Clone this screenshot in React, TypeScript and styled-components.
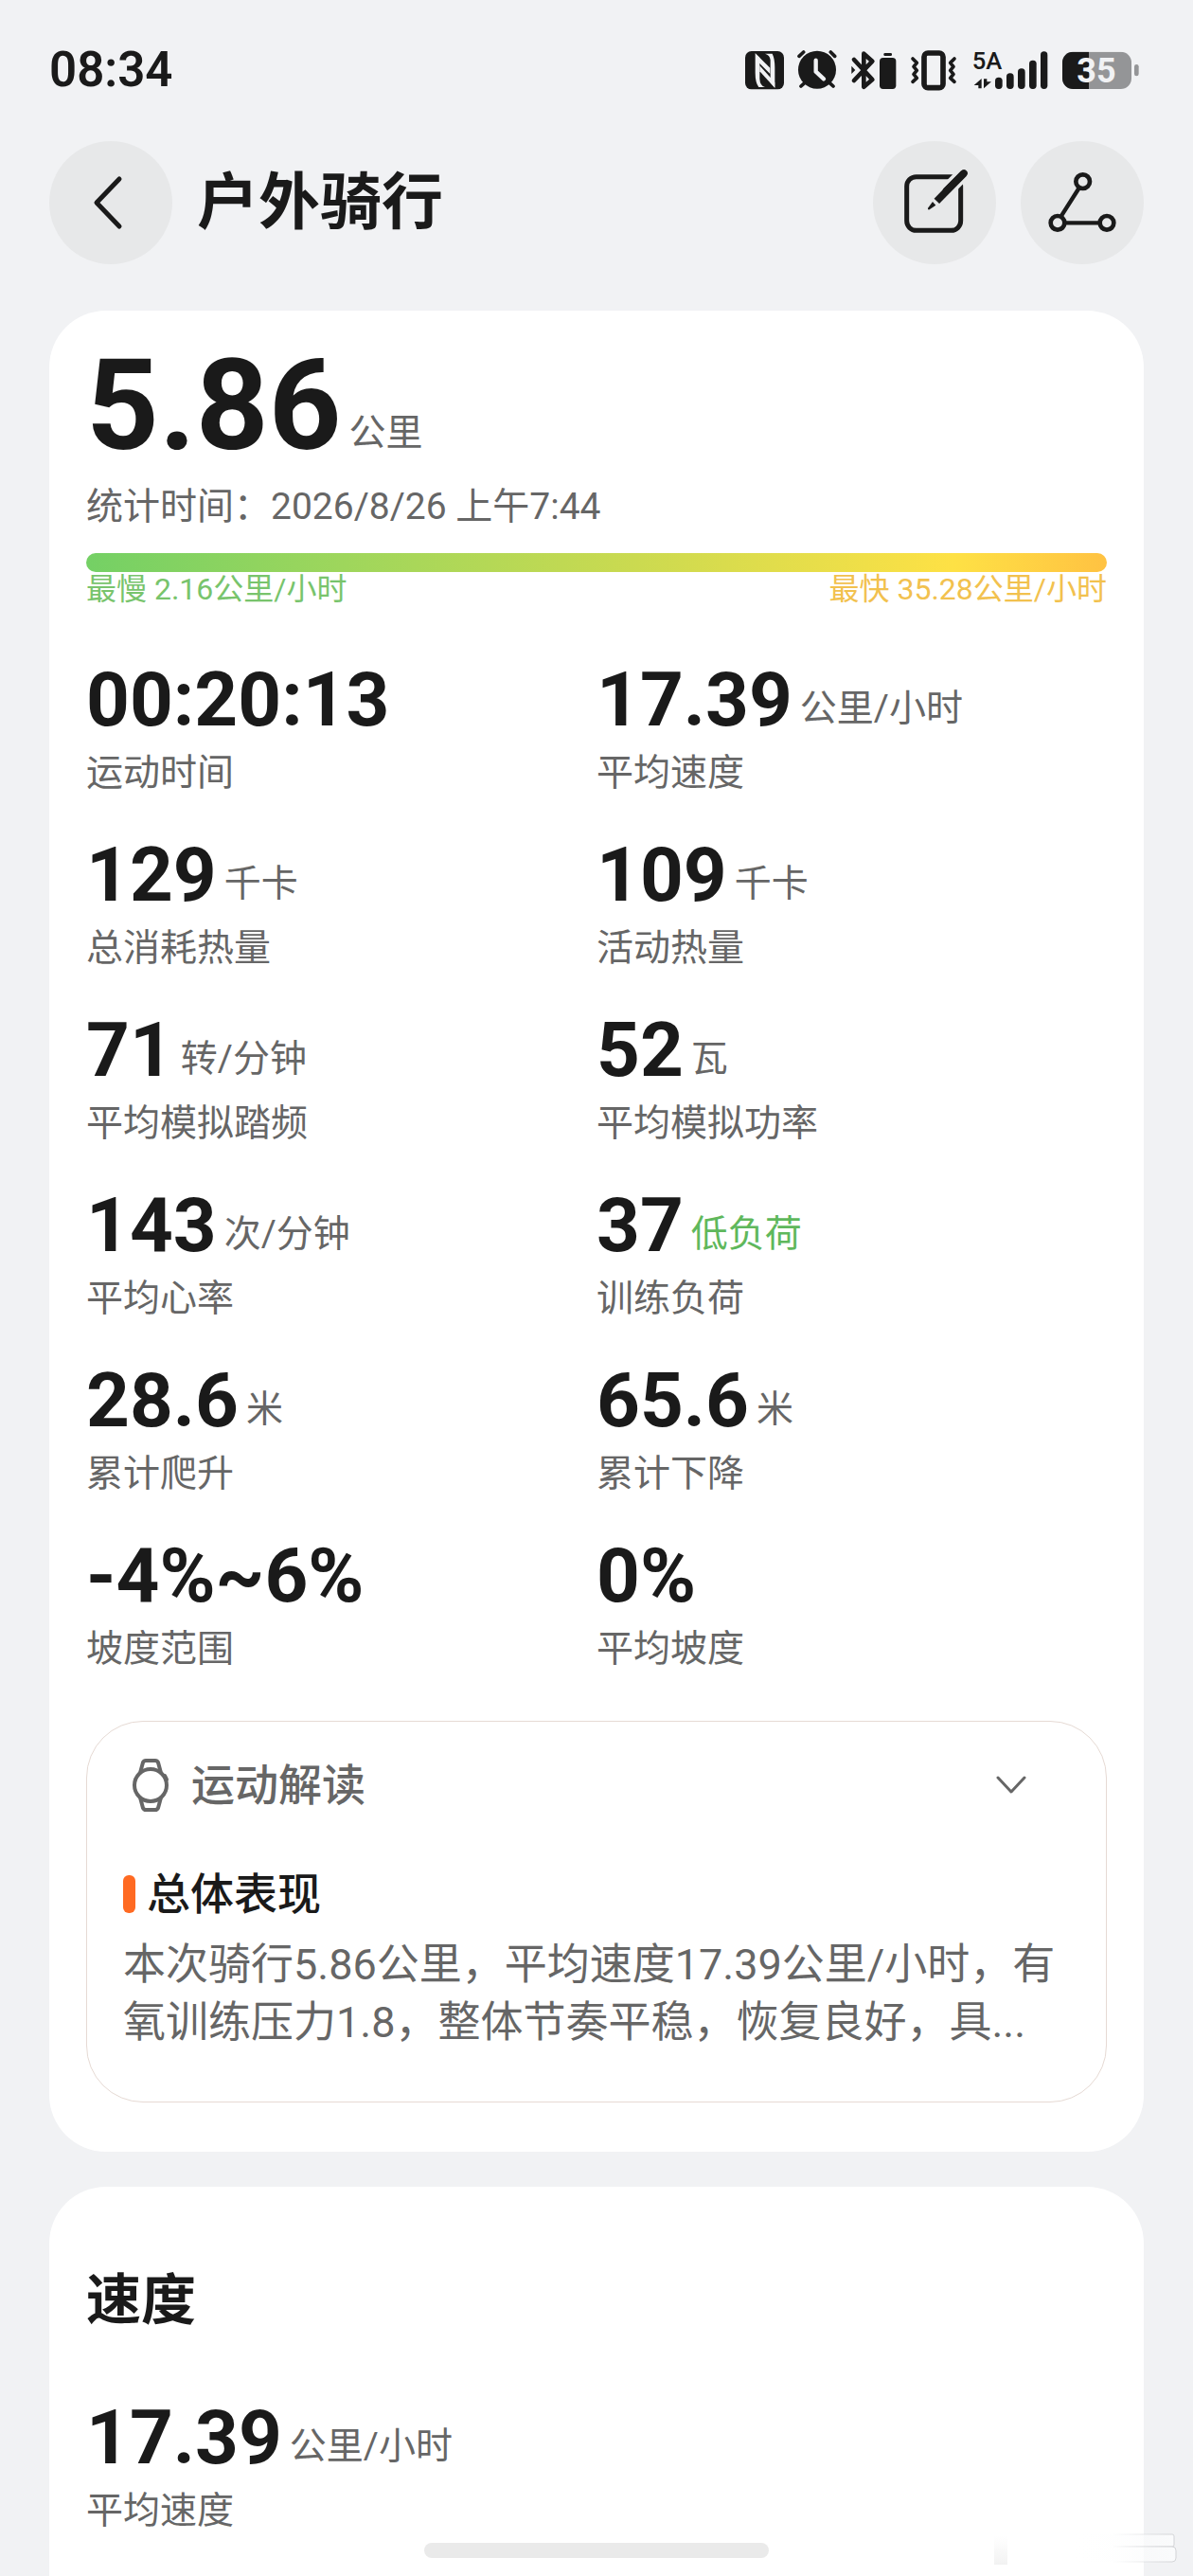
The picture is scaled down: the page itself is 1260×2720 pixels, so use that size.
import React, { useState } from 'react';
import styled, { createGlobalStyle } from 'styled-components';

const color = {
  page: '#f1f2f4',
  card: '#ffffff',
  control: '#e7e8e9',
  text: '#1a1a1a',
  muted: '#666666',
  outline: '#e6dad4',
  accent: '#ff6a22',
  slow: '#78c46c',
  fast: '#f2c14e',
  low: '#5fb85c',
  indicator: '#eaeaea',
};

const GlobalStyle = createGlobalStyle`
  *, *::before, *::after { box-sizing: border-box; }
  body {
    margin: 0;
    background: ${color.page};
    color: ${color.text};
    font-family: Roboto, "Noto Sans CJK SC", sans-serif;
  }
  h1, h2, h3, p, dl, dd { margin: 0; }
  button { font-family: inherit; border: 0; padding: 0; cursor: pointer; }
  svg { display: block; flex: none; }
`;

const Page = styled.div`
  position: relative;
  display: flex;
  flex-direction: column;
  min-height: 100vh;
  overflow: hidden;
`;

const StatusBar = styled.div`
  display: flex;
  align-items: center;
  justify-content: space-between;
  height: 149px;
  padding: 0 57px 2px 52px;
`;

const Clock = styled.time`
  font-size: 51px;
  line-height: 60px;
  font-weight: 600;
`;

const StatusIcons = styled.div`
  display: flex;
  align-items: center;
  gap: 14px;
`;

const Header = styled.header`
  display: flex;
  align-items: center;
  gap: 26px;
  padding: 0 52px;
`;

const RoundButton = styled.button`
  width: 130px;
  height: 130px;
  border-radius: 50%;
  background: ${color.control};
`;

const Title = styled.h1`
  flex: 1;
  font-size: 65px;
  line-height: 84px;
  font-weight: 700;
`;

const Main = styled.main`
  display: flex;
  flex: 1;
  flex-direction: column;
  gap: 37px;
  padding: 49px 52px 0;
`;

const Card = styled.section<{ $continues?: boolean }>`
  flex: ${(p) => (p.$continues ? '1' : 'none')};
  padding: ${(p) => (p.$continues ? '82px 39px 40px' : '35px 39px 52px')};
  border-radius: ${(p) => (p.$continues ? '60px 60px 0 0' : '60px')};
  background: ${color.card};
`;

const Reading = styled.div`
  display: flex;
  align-items: flex-end;
  gap: 8px;
`;

const Figure = styled.span<{ $large?: boolean }>`
  font-size: ${(p) => (p.$large ? '134px' : '80px')};
  line-height: ${(p) => (p.$large ? '132px' : '94px')};
  font-weight: 700;
`;

const Unit = styled.span<{ $tone?: string }>`
  padding-bottom: 12px;
  font-size: 39px;
  line-height: 52px;
  color: ${(p) => p.$tone ?? color.muted};
`;

const Recorded = styled.p`
  margin-top: 14px;
  font-size: 39px;
  line-height: 52px;
  color: ${color.muted};
`;

const SpeedBar = styled.div`
  height: 20px;
  margin-top: 23px;
  border-radius: 10px;
  background: linear-gradient(90deg, #74d065 0%, #9ed65c 25%, #cbda50 54%, #fee145 85%, #ffc242 100%);
`;

const SpeedRange = styled.div`
  display: flex;
  justify-content: space-between;
  font-size: 32px;
  line-height: 36px;
`;

const SpeedLimit = styled.span<{ $tone: string }>`
  color: ${(p) => p.$tone};
`;

const MetricGrid = styled.dl`
  display: grid;
  grid-template-columns: 1fr 1fr;
  row-gap: 35px;
  padding: 52px 0 50px;
`;

const SpeedMetric = styled.dl`
  padding-top: 60px;
`;

const MetricCell = styled.div`
  display: flex;
  flex-direction: column-reverse;
  gap: 4px;
`;

const MetricName = styled.dt`
  font-size: 39px;
  line-height: 52px;
  color: ${color.muted};
`;

const Insight = styled.article`
  padding: 37px 38px 53px;
  border: 1px solid ${color.outline};
  border-radius: 60px;
`;

const InsightToggle = styled.button`
  display: flex;
  align-items: center;
  gap: 16px;
  width: 100%;
  padding-right: 45px;
  background: none;
  color: ${color.muted};
  font-size: 46px;
  line-height: 60px;
  font-weight: 500;
  text-align: left;
`;

const InsightLabel = styled.span`
  flex: 1;
`;

const InsightHeading = styled.h3`
  display: flex;
  align-items: center;
  gap: 12px;
  margin-top: 55px;
  font-size: 46px;
  line-height: 60px;
  font-weight: 500;

  &::before {
    content: '';
    width: 13px;
    height: 40px;
    border-radius: 6px;
    background: ${color.accent};
  }
`;

const InsightText = styled.p`
  margin-top: 14px;
  font-size: 45px;
  line-height: 61px;
  color: ${color.muted};
`;

const SectionTitle = styled.h2`
  font-size: 58px;
  line-height: 76px;
  font-weight: 700;
`;

const HomeIndicator = styled.div`
  position: absolute;
  bottom: 19px;
  left: 50%;
  width: 364px;
  height: 16px;
  margin-left: -182px;
  border-radius: 8px;
  background: ${color.indicator};
`;

const CornerMark = styled.svg`
  position: absolute;
  right: 10px;
  bottom: 10px;
`;

const NfcIcon = () => (
  <svg width="41" height="44" viewBox="85 66 123 132" aria-hidden="true">
    <rect x="85" y="72" width="123" height="121" rx="20" fill={color.text} />
    <g fill={color.page}>
      <path d="M117 79 131 92V160Q132 182 148 186H128Q117 172 117 140Z" />
      <path d="M117 79 164 125V144L128 108Z" />
      <path d="M131 118 179 171V188L131 136Z" />
      <path d="M148 80H171Q179 96 179 124V188L165 172V100Q163 84 148 80Z" />
    </g>
  </svg>
);

const AlarmIcon = () => (
  <svg width="42" height="44" viewBox="252 66 126 132" fill="none" strokeLinecap="round" aria-hidden="true">
    <circle cx="315" cy="131" r="60" fill={color.text} />
    <path d="M258 88 272 75M358 75 371 88M264 183 276 172M354 172 366 183" stroke={color.text} strokeWidth="11" />
    <path d="M311 101V137L336 160" stroke={color.page} strokeWidth="13" strokeLinejoin="round" />
  </svg>
);

const BluetoothIcon = () => (
  <svg width="49" height="44" viewBox="420 66 147 132" aria-hidden="true">
    <path
      d="M432 99 490 162 463 185V80L490 104 432 165"
      fill="none"
      stroke={color.text}
      strokeWidth="14"
      strokeLinecap="round"
      strokeLinejoin="round"
    />
    <path d="M424 119 436 132 424 144Z" fill={color.text} />
    <rect x="526" y="78" width="26" height="9" rx="4" fill={color.text} />
    <rect x="513" y="93" width="52" height="99" rx="11" fill={color.text} />
  </svg>
);

const VibrateIcon = () => (
  <svg
    width="51"
    height="44"
    viewBox="609 66 153 132"
    fill="none"
    stroke={color.text}
    strokeLinecap="round"
    strokeLinejoin="round"
    aria-hidden="true"
  >
    <rect x="654" y="78" width="60" height="110" rx="12" strokeWidth="17" />
    <path
      d="M618 96 631 109 621 121 631 133 621 145 631 157 618 169M750 96 737 109 747 121 737 133 747 145 737 157 750 169"
      strokeWidth="11"
    />
  </svg>
);

const SignalIcon = () => (
  <svg width="82" height="64" viewBox="798 36 246 192" fill={color.text} aria-hidden="true">
    <text x="800" y="128" fontSize="77" fontWeight="500">
      5A
    </text>
    <path d="M806 180 830 159V190H820V180ZM837 190V160H847V169H861Z" />
    <rect x="873" y="155" width="23" height="37" rx="11" />
    <rect x="909" y="142" width="23" height="50" rx="11" />
    <rect x="945" y="127" width="23" height="65" rx="11" />
    <rect x="981" y="101" width="23" height="91" rx="11" />
    <rect x="1017" y="73" width="22" height="119" rx="11" />
  </svg>
);

const BatteryIcon = () => (
  <svg width="81" height="44" viewBox="1086 66 243 132" aria-hidden="true">
    <clipPath id="battery-body">
      <rect x="1086" y="74" width="219" height="118" rx="34" />
    </clipPath>
    <g clipPath="url(#battery-body)">
      <rect x="1086" y="74" width="219" height="118" fill="#949597" />
      <rect x="1086" y="74" width="84" height="118" fill={color.text} />
    </g>
    <rect x="1314" y="114" width="14" height="37" rx="7" fill="#949597" />
    <text x="1194" y="171" fontSize="108" fontWeight="700" textAnchor="middle" fill={color.page}>
      35
    </text>
  </svg>
);

const BackIcon = () => (
  <svg
    width="130"
    height="130"
    viewBox="0 0 130 130"
    fill="none"
    stroke={color.text}
    strokeWidth="5"
    strokeLinecap="round"
    strokeLinejoin="round"
    aria-hidden="true"
  >
    <path d="M74 40 50 65 74 90" />
  </svg>
);

const EditIcon = () => (
  <svg width="130" height="130" viewBox="67 56 390 390" fill="none" aria-hidden="true">
    <rect x="174" y="169" width="171" height="170" rx="30" stroke={color.text} strokeWidth="15" />
    <path d="M385 128 285 228" stroke={color.control} strokeWidth="45" />
    <path d="M355 158 300 213" stroke={color.text} strokeWidth="23" strokeLinecap="round" />
    <path d="M355 158 269 246" stroke={color.text} strokeWidth="23" />
    <path d="M256 248 266 259 246 273Q240 275 241 268Z" fill={color.text} />
  </svg>
);

const RouteIcon = () => (
  <svg width="130" height="130" viewBox="534 56 390 390" fill="none" stroke={color.text} aria-hidden="true">
    <path d="M720 203 662 294M674 315H784" strokeWidth="13" />
    <circle cx="731" cy="184" r="22" strokeWidth="14" />
    <circle cx="651" cy="315" r="22" strokeWidth="14" />
    <circle cx="807" cy="315" r="22" strokeWidth="14" />
  </svg>
);

const WatchIcon = () => (
  <svg width="56" height="60" viewBox="0 0 56 60" fill="none" stroke={color.muted} strokeWidth="4" aria-hidden="true">
    <circle cx="29" cy="30" r="17" />
    <path d="M18 17 21 6Q22 4 24 4H34Q36 4 37 6L40 17M18 43 21 54Q22 56 24 56H34Q36 56 37 54L40 43" />
    <path d="M44 20 46 24" strokeLinecap="round" />
  </svg>
);

const ChevronIcon = () => (
  <svg
    width="34"
    height="20"
    viewBox="0 0 34 20"
    fill="none"
    stroke={color.muted}
    strokeWidth="3"
    strokeLinecap="round"
    strokeLinejoin="round"
    aria-hidden="true"
  >
    <path d="M3 2 17 17 31 2" />
  </svg>
);

type MetricData = { name: string; value: string; unit?: string; tone?: string };

const metrics: MetricData[] = [
  { name: '运动时间', value: '00:20:13' },
  { name: '平均速度', value: '17.39', unit: '公里/小时' },
  { name: '总消耗热量', value: '129', unit: '千卡' },
  { name: '活动热量', value: '109', unit: '千卡' },
  { name: '平均模拟踏频', value: '71', unit: '转/分钟' },
  { name: '平均模拟功率', value: '52', unit: '瓦' },
  { name: '平均心率', value: '143', unit: '次/分钟' },
  { name: '训练负荷', value: '37', unit: '低负荷', tone: color.low },
  { name: '累计爬升', value: '28.6', unit: '米' },
  { name: '累计下降', value: '65.6', unit: '米' },
  { name: '坡度范围', value: '-4%~6%' },
  { name: '平均坡度', value: '0%' },
];

const Metric = ({ name, value, unit, tone }: MetricData) => (
  <MetricCell>
    <MetricName>{name}</MetricName>
    <Reading as="dd">
      <Figure>{value}</Figure>
      {unit && <Unit $tone={tone}>{unit}</Unit>}
    </Reading>
  </MetricCell>
);

export default function App() {
  const [open, setOpen] = useState(true);

  return (
    <Page lang="zh-CN">
      <GlobalStyle />
      <StatusBar>
        <Clock>08:34</Clock>
        <StatusIcons>
          <NfcIcon />
          <AlarmIcon />
          <BluetoothIcon />
          <VibrateIcon />
          <SignalIcon />
          <BatteryIcon />
        </StatusIcons>
      </StatusBar>

      <Header>
        <RoundButton type="button" aria-label="返回">
          <BackIcon />
        </RoundButton>
        <Title>户外骑行</Title>
        <RoundButton type="button" aria-label="编辑">
          <EditIcon />
        </RoundButton>
        <RoundButton type="button" aria-label="轨迹">
          <RouteIcon />
        </RoundButton>
      </Header>

      <Main>
        <Card>
          <Reading>
            <Figure $large>5.86</Figure>
            <Unit>公里</Unit>
          </Reading>
          <Recorded>统计时间：2026/8/26 上午7:44</Recorded>
          <SpeedBar />
          <SpeedRange>
            <SpeedLimit $tone={color.slow}>最慢 2.16公里/小时</SpeedLimit>
            <SpeedLimit $tone={color.fast}>最快 35.28公里/小时</SpeedLimit>
          </SpeedRange>

          <MetricGrid>
            {metrics.map((m) => (
              <Metric key={m.name} {...m} />
            ))}
          </MetricGrid>

          <Insight>
            <InsightToggle type="button" aria-expanded={open} onClick={() => setOpen(!open)}>
              <WatchIcon />
              <InsightLabel>运动解读</InsightLabel>
              <ChevronIcon />
            </InsightToggle>
            {open && (
              <>
                <InsightHeading>总体表现</InsightHeading>
                <InsightText>
                  本次骑行5.86公里，平均速度17.39公里/小时，有氧训练压力1.8，整体节奏平稳，恢复良好，具...
                </InsightText>
              </>
            )}
          </Insight>
        </Card>

        <Card $continues>
          <SectionTitle>速度</SectionTitle>
          <SpeedMetric>
            <Metric name="平均速度" value="17.39" unit="公里/小时" />
          </SpeedMetric>
        </Card>
      </Main>

      <HomeIndicator />
      <CornerMark width="204" height="40" viewBox="0 0 204 40" aria-hidden="true">
        <defs>
          <linearGradient id="mark-fill" x1="0" x2="1">
            <stop offset="0" stopColor="#ffffff" stopOpacity="0" />
            <stop offset="1" stopColor="#fafbfc" />
          </linearGradient>
          <linearGradient id="mark-edge" x1="0" x2="1">
            <stop offset="0.4" stopColor="#d2d3d6" stopOpacity="0" />
            <stop offset="1" stopColor="#d2d3d6" />
          </linearGradient>
          <linearGradient id="mark-smudge" x1="0" x2="0" y1="0" y2="1">
            <stop offset="0" stopColor="#f2f2f2" stopOpacity="0" />
            <stop offset="1" stopColor="#f2f2f2" />
          </linearGradient>
        </defs>
        <rect x="4" y="8" width="14" height="30" fill="url(#mark-smudge)" />
        <rect x="84" y="6" width="110" height="13" rx="2" fill="url(#mark-fill)" stroke="url(#mark-edge)" />
        <rect x="84" y="19" width="112" height="16" rx="4" fill="url(#mark-fill)" stroke="url(#mark-edge)" />
      </CornerMark>
    </Page>
  );
}
